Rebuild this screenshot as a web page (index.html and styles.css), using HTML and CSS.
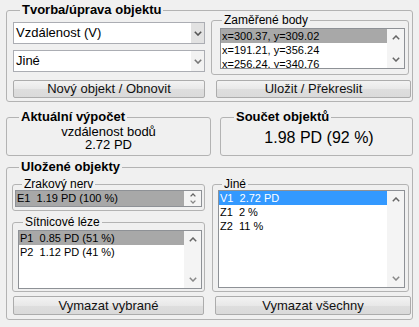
FILE: index.html
```html
<!DOCTYPE html>
<html lang="cs">
<head>
<meta charset="utf-8">
<title>Objekty</title>
<link rel="stylesheet" href="styles.css">
</head>
<body>
<div class="app">

  <fieldset class="group g-create">
    <legend class="title">Tvorba/úprava objektu</legend>
    <div class="create-grid">
      <div class="col-combos">
        <div class="combo combo-active">
          <span class="combo-text">Vzdálenost (V)</span>
          <span class="combo-btn"><svg width="8" height="5" viewBox="0 0 8 5"><path d="M0.8 0.8 L4 4 L7.2 0.8" fill="none" stroke="#555" stroke-width="1.6"/></svg></span>
        </div>
        <div class="combo">
          <span class="combo-text">Jiné</span>
          <span class="combo-btn"><svg width="8" height="5" viewBox="0 0 8 5"><path d="M0.8 0.8 L4 4 L7.2 0.8" fill="none" stroke="#777" stroke-width="1.6"/></svg></span>
        </div>
      </div>
      <fieldset class="sub g-points">
        <legend class="sub-title">Zaměřené body</legend>
        <div class="listbox lb-points">
          <ul class="items">
            <li class="sel-gray">x=300.37, y=309.02</li>
            <li>x=191.21, y=356.24</li>
            <li>x=256.24, y=340.76</li>
          </ul>
          <div class="scroll">
            <span class="sb-btn"><svg width="8" height="5" viewBox="0 0 8 5"><path d="M0.8 4.2 L4 1 L7.2 4.2" fill="none" stroke="#666" stroke-width="1.5"/></svg></span>
            <span class="sb-btn"><svg width="8" height="5" viewBox="0 0 8 5"><path d="M0.8 0.8 L4 4 L7.2 0.8" fill="none" stroke="#666" stroke-width="1.5"/></svg></span>
          </div>
        </div>
      </fieldset>
      <button class="btn btn-left">Nový objekt / Obnovit</button>
      <button class="btn btn-right">Uložit / Překreslit</button>
    </div>
  </fieldset>

  <div class="summary">
    <fieldset class="group g-calc">
      <legend class="title">Aktuální výpočet</legend>
      <div class="calc">
        <div>vzdálenost bodů</div>
        <div>2.72 PD</div>
      </div>
    </fieldset>
    <fieldset class="group g-sum">
      <legend class="title">Součet objektů</legend>
      <div class="sum">1.98 PD (92 %)</div>
    </fieldset>
  </div>

  <fieldset class="group g-saved">
    <legend class="title">Uložené objekty</legend>
    <div class="saved-grid">
      <div class="col-left">
        <fieldset class="sub g-nerve">
          <legend class="sub-title">Zrakový nerv</legend>
          <div class="listbox lb-nerve">
            <ul class="items">
              <li class="sel-gray">E1  1.19 PD (100 %)</li>
            </ul>
            <div class="scroll scroll-mini">
              <span class="sb-mini"><svg width="6" height="4" viewBox="0 0 6 4"><path d="M0.6 3.4 L3 1 L5.4 3.4" fill="none" stroke="#666" stroke-width="1.3"/></svg></span>
              <span class="sb-mini"><svg width="6" height="4" viewBox="0 0 6 4"><path d="M0.6 0.6 L3 3 L5.4 0.6" fill="none" stroke="#888" stroke-width="1.3"/></svg></span>
            </div>
          </div>
        </fieldset>
        <fieldset class="sub g-retina">
          <legend class="sub-title">Sítnicové léze</legend>
          <div class="listbox lb-retina">
            <ul class="items">
              <li class="sel-gray">P1  0.85 PD (51 %)</li>
              <li>P2  1.12 PD (41 %)</li>
            </ul>
            <div class="scroll">
              <span class="sb-btn"><svg width="8" height="5" viewBox="0 0 8 5"><path d="M0.8 4.2 L4 1 L7.2 4.2" fill="none" stroke="#666" stroke-width="1.5"/></svg></span>
              <span class="sb-btn"><svg width="8" height="5" viewBox="0 0 8 5"><path d="M0.8 0.8 L4 4 L7.2 0.8" fill="none" stroke="#888" stroke-width="1.5"/></svg></span>
            </div>
          </div>
        </fieldset>
      </div>
      <fieldset class="sub g-other">
        <legend class="sub-title">Jiné</legend>
        <div class="listbox lb-other">
          <ul class="items">
            <li class="sel-blue">V1  2.72 PD</li>
            <li>Z1  2 %</li>
            <li>Z2  11 %</li>
          </ul>
          <div class="scroll">
            <span class="sb-btn"><svg width="8" height="5" viewBox="0 0 8 5"><path d="M0.8 4.2 L4 1 L7.2 4.2" fill="none" stroke="#666" stroke-width="1.5"/></svg></span>
            <span class="sb-btn"><svg width="8" height="5" viewBox="0 0 8 5"><path d="M0.8 0.8 L4 4 L7.2 0.8" fill="none" stroke="#888" stroke-width="1.5"/></svg></span>
          </div>
        </div>
      </fieldset>
      <button class="btn btn-del-sel">Vymazat vybrané</button>
      <button class="btn btn-del-all">Vymazat všechny</button>
    </div>
  </fieldset>

</div>
</body>
</html>
```

FILE: styles.css
```css
* { box-sizing: border-box; }

html, body {
  margin: 0;
  background: #f0f0f0;
}

body {
  font-family: "Liberation Sans", Arial, sans-serif;
  font-size: 13px;
  color: #000;
}

.app {
  display: flex;
  flex-direction: column;
  align-items: flex-start;
  padding: 2px 0 0 6px;
  width: 419px;
}

/* ---------- group boxes ---------- */
fieldset {
  margin: 0;
  min-width: 0;
  border: 1px solid #b3b3b3;
  border-radius: 3px;
}

.title {
  font-weight: bold;
  font-size: 13px;
  line-height: 16px;
  padding: 0 2px;
}

.sub-title {
  font-size: 12px;
  line-height: 12px;
  padding: 0 2px;
}

.g-create {
  width: 407px;
  padding: 4px 1px 3px 6px;
}
.g-create > .title { margin-left: 7px; }

.create-grid {
  display: grid;
  grid-template-columns: 192px 200px;
  column-gap: 6px;
  row-gap: 5px;
  align-items: start;
}

.col-combos {
  display: flex;
  flex-direction: column;
  gap: 6px;
}

/* combo boxes */
.combo {
  display: flex;
  height: 22px;
  border: 1px solid #abadb3;
  background: #fff;
}
.combo-text {
  flex: 1;
  padding-left: 2px;
  line-height: 20px;
  font-size: 13px;
  white-space: nowrap;
}
.combo-btn {
  width: 13px;
  display: flex;
  align-items: center;
  justify-content: center;
  background: #f2f2f2;
}
.combo-active .combo-btn {
  background: #e2e2e2;
}

/* sub groups */
.g-points {
  width: 198px;
  margin-top: -8px;
  padding: 2px 3px 5px 8px;
}
.g-points > .sub-title { margin-left: 2px; }

/* list boxes */
.listbox {
  display: flex;
  border: 1px solid #8e9196;
  background: #fff;
  overflow: hidden;
}
.items {
  flex: 1;
  margin: 0;
  padding: 0;
  list-style: none;
  overflow: hidden;
}
.items li {
  height: 14px;
  line-height: 14px;
  font-size: 11px;
  padding-left: 1px;
  white-space: pre;
  color: #000;
}
.items li.sel-gray {
  background: #a8a8a8;
}
.items li.sel-blue {
  background: #3399ff;
  color: #fff;
}

.scroll {
  width: 17px;
  display: flex;
  flex-direction: column;
  justify-content: space-between;
  background: #f4f4f4;
}
.sb-btn {
  height: 17px;
  display: flex;
  align-items: center;
  justify-content: center;
}
.scroll-mini {
  justify-content: flex-start;
}
.sb-mini {
  height: 7px;
  display: flex;
  align-items: center;
  justify-content: center;
}

.lb-points {
  width: 185px;
  height: 41px;
}

/* buttons */
.btn {
  height: 18px;
  padding: 0;
  font-family: inherit;
  font-size: 13px;
  line-height: 16px;
  color: #111;
  border: 1px solid #acacac;
  border-radius: 2px;
  background: linear-gradient(#f3f3f3, #e8e8e8 50%, #dedede 51%, #dadada);
}
.btn-left { width: 192px; }
.btn-right { width: 195px; margin-left: 5px; }

/* summary row */
.summary {
  display: flex;
  gap: 9px;
  margin-top: 7px;
}
.g-calc {
  width: 205px;
  padding: 0 6px 4px 6px;
}
.g-calc > .title { margin-left: 6px; }
.g-sum {
  width: 193px;
  padding: 0 6px 4px 6px;
}
.g-sum > .title { margin-left: 7px; }

.calc {
  height: 26px;
  text-align: center;
  font-size: 13px;
  line-height: 13px;
}
.sum {
  height: 26px;
  text-align: center;
  font-size: 16px;
  line-height: 26px;
  padding-left: 5px;
}

/* saved objects */
.g-saved {
  width: 407px;
  margin-top: 3px;
  padding: 3px 1px 4px 5px;
}
.g-saved > .title { margin-left: 7px; }

.saved-grid {
  display: grid;
  grid-template-columns: 193px 199px;
  column-gap: 7px;
  row-gap: 4px;
  align-items: start;
}

.col-left {
  display: flex;
  flex-direction: column;
}

.g-nerve {
  width: 193px;
  padding: 0 2px 3px 2px;
}
.g-nerve > .sub-title { margin-left: 7px; }
.lb-nerve {
  width: 187px;
  height: 17px;
}
.lb-nerve .items li { height: 15px; line-height: 15px; }

.g-retina {
  width: 193px;
  margin-top: 5px;
  padding: 2px 2px 2px 5px;
}
.g-retina > .sub-title { margin-left: 5px; }
.lb-retina {
  width: 184px;
  height: 59px;
}

.g-other {
  width: 197px;
  padding: 0 3px 3px 5px;
}
.g-other > .sub-title { margin-left: 4px; }
.lb-other {
  width: 187px;
  height: 98px;
}

.btn-del-sel { width: 191px; height: 19px; margin-left: 1px; }
.btn-del-all { width: 196px; height: 19px; margin-left: 3px; }
```
